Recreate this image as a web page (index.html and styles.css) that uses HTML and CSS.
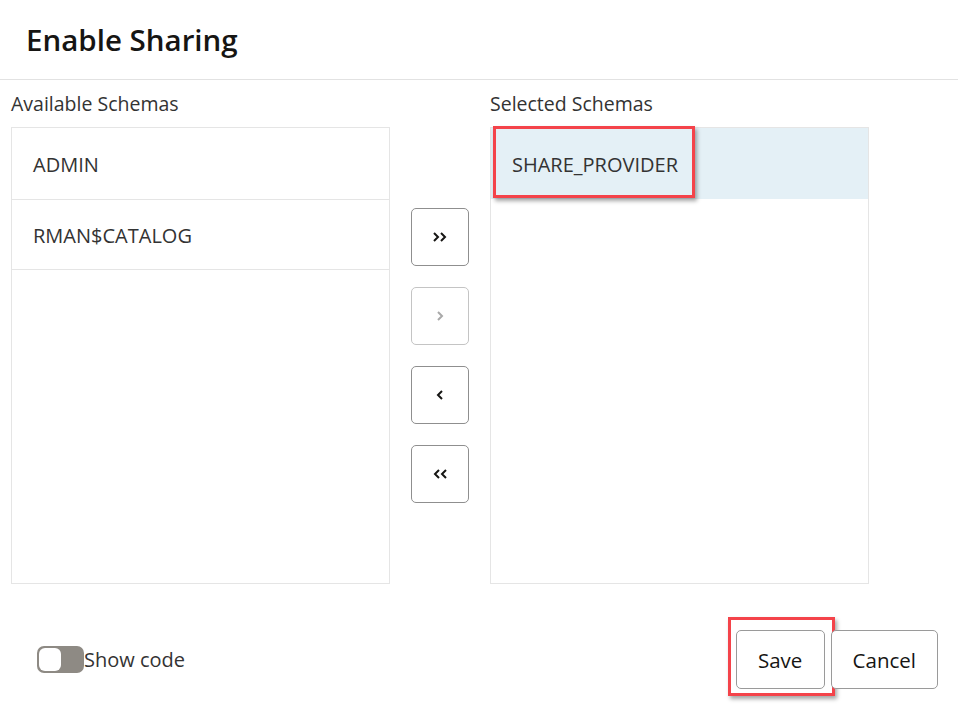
FILE: index.html
```html
<!DOCTYPE html>
<html>
<head>
<meta charset="utf-8">
<link rel="stylesheet" href="styles.css">
</head>
<body>
<div class="dialog">
  <header class="head"><h1 class="title">Enable Sharing</h1></header>
  <main class="body">
    <section class="col">
      <div class="label">Available Schemas</div>
      <ul class="list">
        <li class="item">ADMIN</li>
        <li class="item">RMAN$CATALOG</li>
      </ul>
    </section>
    <section class="mid">
      <button class="mv">
        <svg width="18" height="12" viewBox="0 0 18 12"><path d="M3 2l4 4-4 4M10 2l4 4-4 4" fill="none" stroke="#161513" stroke-width="2"/></svg>
      </button>
      <button class="mv disabled">
        <svg width="18" height="12" viewBox="0 0 18 12"><path d="M7 2l4 4-4 4" fill="none" stroke="#a9a9a9" stroke-width="2"/></svg>
      </button>
      <button class="mv">
        <svg width="18" height="12" viewBox="0 0 18 12"><path d="M11 2l-4 4 4 4" fill="none" stroke="#161513" stroke-width="2"/></svg>
      </button>
      <button class="mv">
        <svg width="18" height="12" viewBox="0 0 18 12"><path d="M8 2l-4 4 4 4M15 2l-4 4 4 4" fill="none" stroke="#161513" stroke-width="2"/></svg>
      </button>
    </section>
    <section class="col">
      <div class="label">Selected Schemas</div>
      <ul class="list">
        <li class="item selected"><span class="hl hl-item"></span>SHARE_PROVIDER</li>
      </ul>
    </section>
  </main>
  <footer class="foot">
    <label class="toggle"><span class="track"><span class="knob"></span></span>Show code</label>
    <div class="actions">
      <button class="btn save"><span class="hl hl-save"></span>Save</button>
      <button class="btn">Cancel</button>
    </div>
  </footer>
</div>
</body>
</html>
```
FILE: styles.css
```css
* { box-sizing: border-box; }
html, body { margin: 0; padding: 0; background: #fff; }
body {
  font-family: "Open Sans", "Noto Sans", sans-serif;
  color: #161513;
  width: 958px;
  height: 707px;
  overflow: hidden;
}
.head {
  height: 80px;
  border-bottom: 1px solid #e2e2e2;
  padding-left: 26px;
  display: flex;
  align-items: center;
}
.title {
  margin: 0;
  font-size: 29.5px;
  font-weight: 600;
  margin-top: -1px;
}
.body {
  display: flex;
  padding: 0 0 0 11px;
}
.col { display: flex; flex-direction: column; }
.label {
  height: 47px;
  padding-top: 10px;
  font-size: 19.5px;
  line-height: 27px;
  color: #333;
}
.list {
  list-style: none;
  margin: 0;
  padding: 0;
  width: 379px;
  height: 457px;
  border: 1px solid #e5e5e5;
}
.item {
  position: relative;
  height: 72px;
  padding-left: 21px;
  display: flex;
  align-items: center;
  font-size: 20px;
  color: #333;
  border-bottom: 1px solid #e5e5e5;
  padding-top: 2px;
}
.item + .item { height: 70px; }
.item.selected {
  background: #e4f0f6;
  border-bottom: none;
  height: 71px;
}
.mid {
  width: 100px;
  padding-top: 128px;
  display: flex;
  flex-direction: column;
  align-items: center;
  gap: 21px;
}
.mv {
  width: 58px;
  height: 58px;
  border: 1px solid #8f8f8f;
  border-radius: 5px;
  background: #fff;
  display: flex;
  align-items: center;
  justify-content: center;
  padding: 0;
}
.mv.disabled { border-color: #c4c4c4; }
.foot {
  display: flex;
  justify-content: space-between;
  align-items: center;
  padding: 46px 20px 0 37px;
}
.toggle {
  display: flex;
  align-items: center;
  font-size: 20px;
  color: #333;
}
.track {
  width: 47px;
  height: 27px;
  border-radius: 7px;
  background: #8e8a84;
  padding: 2px;
  display: flex;
}
.knob {
  width: 22px;
  height: 23px;
  background: #fff;
  border-radius: 6px;
}
.actions { display: flex; gap: 6px; }
.btn {
  position: relative;
  height: 59px;
  border: 1px solid #9a9a9a;
  border-radius: 5px;
  background: #fff;
  font-family: inherit;
  font-size: 20.5px;
  font-weight: 500;
  color: #161513;
  padding: 0 21px;
}
.btn.save { width: 89px; }
.hl {
  position: absolute;
  border: 3px solid #f4434a;
  box-shadow: 2px 3px 4px rgba(0,0,0,0.35);
  pointer-events: none;
}
.hl-item { left: 2px; top: -2px; width: 202px; height: 72px; }
.hl-save { left: -9px; top: -14px; width: 107px; height: 79px; }
```
